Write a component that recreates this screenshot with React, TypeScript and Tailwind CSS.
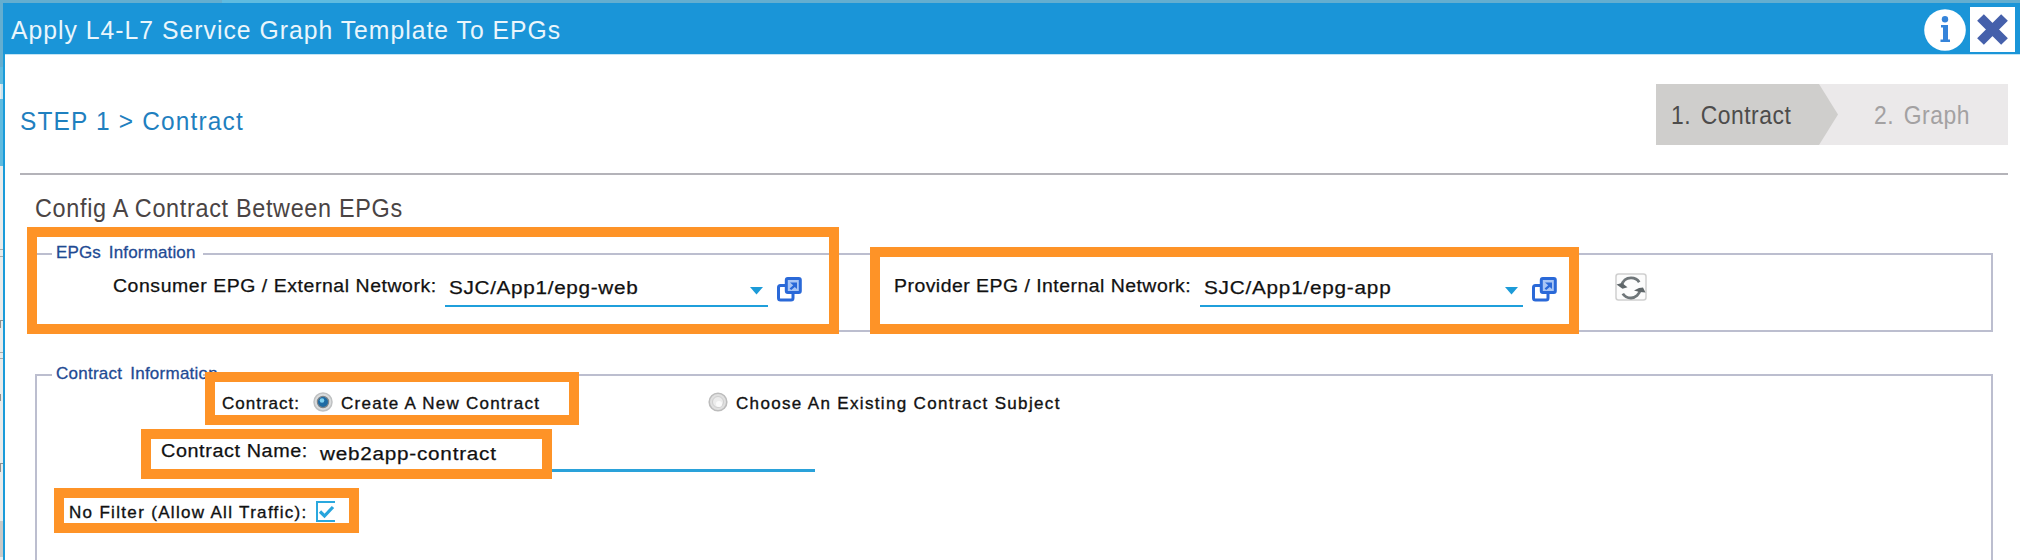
import type { ReactNode } from "react";

function OpenIcon() {
  return (
    <svg width="25" height="25" viewBox="0 0 25 25" fill="none">
      <rect x="1.5" y="8.5" width="14.5" height="14.5" rx="2" stroke="#2a69d8" strokeWidth="3" fill="#fff" />
      <rect x="9.3" y="1.5" width="14" height="14" rx="1.5" stroke="#2a69d8" strokeWidth="3" fill="#a9c6f5" />
      <path d="M13 5.5h7v6.5l-2.2-2-3.6 3-1.6-1.6 3.6-3.2z" fill="#2a69d8" />
    </svg>
  );
}

function RefreshIcon() {
  return (
    <svg width="32" height="28" viewBox="0 0 32 28" fill="none">
      <rect x="1" y="1" width="30" height="26" rx="2.5" fill="#fcfcfc" stroke="#cfcfcf" strokeWidth="1.5" />
      <path d="M6.5 13C7.5 7.5 11.5 4.8 16 4.8c3.6 0 6.6 1.6 8.2 4.4" stroke="#6f7679" strokeWidth="2.8" />
      <path d="M25.5 16C24.5 21.5 20.5 25 16 25c-3.6 0-6.6-1.6-8.2-4.4" stroke="#6f7679" strokeWidth="2.8" />
      <path d="M1.5 11.5l6 4.3 5-1.6-5.5-4.2z" fill="#5f6669" />
      <path d="M30.5 19.5l-2.500-5-4 .5-5 2.500 5.500 1.500z" fill="#5f6669" />
    </svg>
  );
}

function InfoIcon() {
  return (
    <svg width="42" height="42" viewBox="0 0 42 42">
      <circle cx="21" cy="21" r="20.8" fill="#fff" />
      <circle cx="21" cy="10.3" r="3.2" fill="#3584da" />
      <path d="M17 16h7v14.5h2V33H16.500v-2.500H19v-12h-2z" fill="#3584da" />
    </svg>
  );
}

function CloseIcon() {
  return (
    <svg width="45" height="45" viewBox="0 0 45 45">
      <rect width="45" height="45" fill="#fff" />
      <path d="M10.500 10.500L34.500 34.500M34.500 10.500L10.500 34.500" stroke="#4560ab" strokeWidth="9.500" />
    </svg>
  );
}

function Select({ value, valueClass }: { value: string; valueClass: string }) {
  return (
    <div className="mt-[3px] flex h-[31px] w-[323px] shrink-0 justify-between border-b-2 border-[#1f9fdb] pr-[5px] pl-1">
      <span className={`mt-[2px] block h-5 origin-left scale-x-[1.15] text-[18px] leading-5 ${valueClass}`}>{value}</span>
      <svg className="mt-[11px]" width="13" height="8" viewBox="0 0 13 8">
        <path d="M0 0h13L6.500 7.500z" fill="#1c9bd8" />
      </svg>
    </div>
  );
}

function Group({ title, titleClass, className, children }: { title: string; titleClass: string; className: string; children: ReactNode }) {
  return (
    <section className={`ml-[30px] w-[1958px] border-x-2 border-[#bcbecf] ${className}`}>
      <div className="-mt-[11px] flex h-5 w-full">
        <div className="mt-[11px] h-[2px] w-[15px] bg-[#bcbecf]" />
        <h3 className={`mt-px ml-1 w-[147px] shrink-0 text-[17px] leading-5 text-[#1f4a93] [-webkit-text-stroke:0.3px] ${titleClass}`}>{title}</h3>
        <div className="mt-[11px] h-[2px] flex-1 bg-[#bcbecf]" />
      </div>
      {children}
    </section>
  );
}

export default function App() {
  return (
    <div className="relative flex h-[560px] w-[2020px] overflow-hidden bg-white font-['Liberation_Sans',Arial,sans-serif] whitespace-nowrap text-[#111]">
      <div className="flex w-[3px] shrink-0 flex-col bg-[#e9ebea]">
        <div className="h-[67px] bg-[#64aed0]" />
        <div className="h-[17px] bg-[#5fbbe0]" />
        <div className="ml-px h-[15px] bg-[#c9e3ee]" />
        <div className="h-[67px] bg-[#5fbbe0]" />
        <div className="mt-[83px] h-2 border-y border-[#a9abaa]" />
        <div className="mt-[63px] h-[8px] border-t border-l border-[#8f9190]" />
        <div className="mt-[24px] h-[7px] border-y border-[#a9abaa]" />
        <div className="mt-[35px] h-[7px] w-px bg-[#8f9190]" />
        <div className="mt-[62px] h-[9px] border-t border-l border-[#8f9190]" />
        <div className="mt-[49px] h-[36px] bg-[#c9c9c7]" />
      </div>

      <div className="flex min-w-0 flex-1 flex-col">
        <div className="flex h-[3px] shrink-0 bg-[#64aed0]">
          <div className="ml-[219px] w-[198px] bg-[#5fbbe0]" />
        </div>
        <header className="flex h-[51px] shrink-0 justify-between bg-[#1a95d8] pr-[5px] pl-2">
          <h1 className="mt-3 h-[30px] origin-left scale-x-95 text-[26px] leading-[30px] tracking-[1.080px] text-[#eaf6fc]">
            Apply L4-L7 Service Graph Template To EPGs
          </h1>
          <div className="flex">
            <div className="mt-[6px] mr-1"><InfoIcon /></div>
            <div className="mt-[4px]"><CloseIcon /></div>
          </div>
        </header>

        <main className="flex flex-1 flex-col border-l-2 border-[#1a9bd9]">
          <div className="h-px w-full bg-[#c4e5f5]" />
          <div className="ml-[15px] flex h-[120px] w-[1988px] shrink-0 justify-between border-b-2 border-[#b4b3b9]">
            <h2 className="mt-[51px] h-[30px] origin-left scale-x-[.94] text-[26px] leading-[30px] tracking-[1.250px] text-[#1f80bf]">
              STEP 1 &gt; Contract
            </h2>
            <nav className="mt-[29px] flex h-[61px] w-[352px] bg-[#ebe9ea] text-[26px] leading-[30px]">
              <div className="flex w-[163px] bg-[#cfcecc] pl-[15px] text-[#4d4c4b]">
                <span className="mt-4 h-[30px] origin-left scale-x-[.88] tracking-[.600px] [word-spacing:3px]">1. Contract</span>
              </div>
              <svg width="19" height="61" viewBox="0 0 19 61">
                <path d="M0 0L19 30.500L0 61z" fill="#cfcecc" />
              </svg>
              <span className="mt-4 ml-[36px] h-[30px] origin-left scale-x-[.88] tracking-[.600px] [word-spacing:3px] text-[#a3a1a2]">2. Graph</span>
            </nav>
          </div>
          <h2 className="mt-[18px] ml-[30px] h-[30px] w-fit origin-left scale-x-90 text-[26px] leading-[30px] tracking-[.760px] text-[#4a4444]">
            Config A Contract Between EPGs
          </h2>

          <Group title="EPGs Information" titleClass="tracking-[.150px] [word-spacing:3px]" className="mt-[30px] h-[79px] shrink-0 border-b-2">
            <div className="mt-[11px] flex h-[40px] pl-[76px] [-webkit-text-stroke:0.25px]">
              <span className="mt-[3px] block h-5 w-[332px] shrink-0 text-[18px] leading-5">
                <span className="inline-block origin-left scale-x-[1.080] tracking-[.520px]">Consumer EPG / External Network:</span>
              </span>
              <Select value="SJC/App1/epg-web" valueClass="tracking-[.600px]" />
              <div className="mt-1 ml-[9px] w-[25px]"><OpenIcon /></div>
              <span className="mt-[3px] ml-[92px] block h-5 w-[306px] shrink-0 text-[18px] leading-5">
                <span className="inline-block origin-left scale-x-[1.080] tracking-[.440px]">Provider EPG / Internal Network:</span>
              </span>
              <Select value="SJC/App1/epg-app" valueClass="tracking-[.680px]" />
              <div className="mt-1 ml-[9px] w-[25px]"><OpenIcon /></div>
              <div className="ml-[58px]"><RefreshIcon /></div>
            </div>
          </Group>

          <Group title="Contract Information" titleClass="tracking-[.250px] [word-spacing:3px]" className="mt-[42px] h-[186px] shrink-0">
            <div className="flex h-[40px] pt-[10px] pl-[185px] text-[17px] leading-5 [-webkit-text-stroke:0.35px]">
              <span className="mt-px w-[91px] tracking-[1px]">Contract:</span>
              <svg className="mt-[-1px]" width="20" height="20" viewBox="0 0 20 20">
                <circle cx="10" cy="10" r="9" fill="#dadcdd" stroke="#bfc1c2" strokeWidth="1.5" />
                <circle cx="10" cy="10" r="5.600" fill="#1f6ba3" stroke="#7e8488" strokeWidth="1.2" />
                <circle cx="9" cy="8.500" r="2.300" fill="#7fd0ef" />
              </svg>
              <span className="mt-px ml-[8px] w-[367px] tracking-[1.250px]">Create A New Contract</span>
              <svg className="mt-[-1px]" width="20" height="20" viewBox="0 0 20 20">
                <circle cx="10" cy="10" r="8.800" fill="#e0e0e0" stroke="#bcbcbc" strokeWidth="1.6" />
                <circle cx="10" cy="10" r="5.500" fill="#ececec" stroke="#cecece" strokeWidth="1" />
                <circle cx="11" cy="12" r="3" fill="#fafafa" />
              </svg>
              <span className="mt-px ml-[8px] tracking-[1.340px]">Choose An Existing Contract Subject</span>
            </div>
            <div className="mt-[11px] flex h-[40px] pl-[124px] text-[18px] leading-5 [-webkit-text-stroke:0.25px]">
              <span className="mt-[7px] h-5 w-[156px]">
                <span className="inline-block origin-left scale-x-110 tracking-[.540px]">Contract Name:</span>
              </span>
              <div className="h-[38px] w-[498px] border-b-[3px] border-[#2aa2da] pt-[10px] pl-[3px]">
                <span className="inline-block origin-left scale-x-[1.150] tracking-[.660px]">web2app-contract</span>
              </div>
            </div>
            <div className="mt-[18px] flex pl-[32px] text-[17px] leading-5 [-webkit-text-stroke:0.35px]">
              <span className="mt-[11px] w-[247px] tracking-[1.320px]">No Filter (Allow All Traffic):</span>
              <svg className="mt-[9px]" width="20" height="21" viewBox="0 0 20 21" fill="none">
                <path d="M19 1H1v19h18" stroke="#2aa8de" strokeWidth="2" />
                <path d="M4 10.500l4.500 4.500 8.500-9" stroke="#28a5dd" strokeWidth="3.200" />
              </svg>
            </div>
          </Group>
        </main>
      </div>

      <div className="absolute top-[227px] left-[27px] h-[107px] w-[812px] border-10 border-[#fe9327]" />
      <div className="absolute top-[247px] left-[870px] h-[87px] w-[709px] border-10 border-[#fe9327]" />
      <div className="absolute top-[372px] left-[205px] h-[53px] w-[374px] border-10 border-[#fe9327]" />
      <div className="absolute top-[429px] left-[141px] h-[50px] w-[411px] border-10 border-[#fe9327]" />
      <div className="absolute top-[488px] left-[54px] h-[45px] w-[305px] border-10 border-[#fe9327]" />
    </div>
  );
}
